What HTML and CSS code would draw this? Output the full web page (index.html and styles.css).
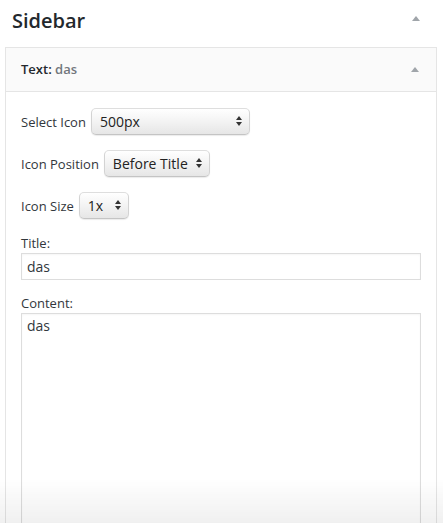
FILE: index.html
```html
<!DOCTYPE html>
<html lang="en">
<head>
<meta charset="utf-8">
<title>Sidebar</title>
<link rel="stylesheet" href="styles.css">
</head>
<body>
<div class="sidebar">
  <div class="sidebar-name">
    <h2>Sidebar</h2>
    <span class="toggle"></span>
  </div>
  <div class="widget">
    <div class="widget-top">
      <h3>Text:<span class="in-title"> das</span></h3>
      <span class="toggle"></span>
    </div>
    <div class="widget-inside">
      <div class="row">
        <label class="row-label">Select Icon</label>
        <div class="select select-icon">
          <select><option>500px</option></select>
          <span class="arrows"></span>
        </div>
      </div>
      <div class="row">
        <label class="row-label">Icon Position</label>
        <div class="select select-pos">
          <select><option>Before Title</option></select>
          <span class="arrows"></span>
        </div>
      </div>
      <div class="row">
        <label class="row-label">Icon Size</label>
        <div class="select select-size">
          <select><option>1x</option></select>
          <span class="arrows"></span>
        </div>
      </div>
      <label class="field-label field-title">Title:</label>
      <input class="text-input" type="text" value="das">
      <label class="field-label field-content">Content:</label>
      <textarea class="text-area">das</textarea>
    </div>
  </div>
</div>
<div class="fade"></div>
</body>
</html>
```

FILE: styles.css
```css
html, body {
  margin: 0;
  padding: 0;
  background: #fff;
  height: 100%;
  overflow: hidden;
}
body {
  font-family: "Open Sans", "Liberation Sans", sans-serif;
  color: #32373c;
  font-size: 13px;
}
.sidebar-name {
  display: flex;
  justify-content: space-between;
  padding: 7px 23px 12px 12px;
}
.sidebar-name h2 {
  margin: 0;
  font-size: 20px;
  line-height: 28px;
  font-weight: 600;
  color: #23282d;
}
.toggle {
  width: 0;
  height: 0;
  border-left: 4px solid transparent;
  border-right: 4px solid transparent;
  border-bottom: 5px solid #a0a5aa;
}
.sidebar-name .toggle {
  margin-top: 9px;
}
.widget {
  margin: 0 6px 0 5px;
  border: 1px solid #e5e5e5;
  border-bottom: 0;
  background: #fff;
}
.widget-top {
  display: flex;
  justify-content: space-between;
  align-items: flex-start;
  background: #fafafa;
  border-bottom: 1px solid #e5e5e5;
}
.widget-top h3 {
  margin: 0;
  padding: 15px;
  font-size: 13px;
  line-height: 13px;
  font-weight: 600;
  color: #23282d;
}
.in-title {
  color: #72777c;
  font-weight: 600;
}
.widget-top .toggle {
  margin: 19px 17px 0 0;
}
.widget-inside {
  padding: 16px 15px 0 15px;
}
.row {
  display: flex;
  align-items: center;
  gap: 5px;
  margin-bottom: 15px;
  height: 27px;
}
.row-label {
  color: #32373c;
  font-size: 13px;
  line-height: 18px;
}
.select {
  position: relative;
  height: 27px;
  box-sizing: border-box;
}
.select select {
  appearance: none;
  -webkit-appearance: none;
  width: 100%;
  height: 27px;
  box-sizing: border-box;
  margin: 0;
  padding: 0 16px 0 8px;
  font-family: "Open Sans", "Liberation Sans", sans-serif;
  font-size: 14px;
  color: #222;
  border: 1px solid #d3d3d3;
  border-top-color: #dedede;
  border-bottom-color: #c4c4c4;
  border-radius: 5px;
  background: linear-gradient(#ffffff, #f3f3f3 50%, #e6e6e6);
  box-shadow: 0 1px 1px rgba(0, 0, 0, 0.08);
  outline: none;
}
.select-icon { width: 159px; }
.select-pos { width: 106px; }
.select-size { width: 50px; }
.arrows {
  position: absolute;
  right: 8px;
  top: 8px;
  width: 0;
  height: 0;
  border-left: 3px solid transparent;
  border-right: 3px solid transparent;
  border-bottom: 4px solid #333;
}
.arrows::after {
  content: "";
  position: absolute;
  left: -3px;
  top: 6px;
  border-left: 3px solid transparent;
  border-right: 3px solid transparent;
  border-top: 4px solid #333;
}
.field-label {
  display: block;
  line-height: 18px;
  color: #32373c;
}
.field-title {
  margin-top: 3px;
}
.field-content {
  margin-top: 14px;
}
.text-input,
.text-area {
  display: block;
  width: 100%;
  box-sizing: border-box;
  margin: 1px 0 0 0;
  border: 1px solid #ddd;
  box-shadow: inset 0 1px 2px rgba(0, 0, 0, 0.04);
  font-family: "Open Sans", "Liberation Sans", sans-serif;
  font-size: 14px;
  color: #32373c;
  background: #fff;
  outline: none;
}
.text-input {
  height: 27px;
  padding: 0 5px;
}
.text-area {
  height: 260px;
  padding: 2px 5px;
  resize: none;
  line-height: 20px;
}
.fade {
  position: fixed;
  left: 0;
  right: 0;
  bottom: 0;
  height: 45px;
  background: linear-gradient(to bottom, rgba(0, 0, 0, 0), rgba(0, 0, 0, 0.06));
  pointer-events: none;
}
```
